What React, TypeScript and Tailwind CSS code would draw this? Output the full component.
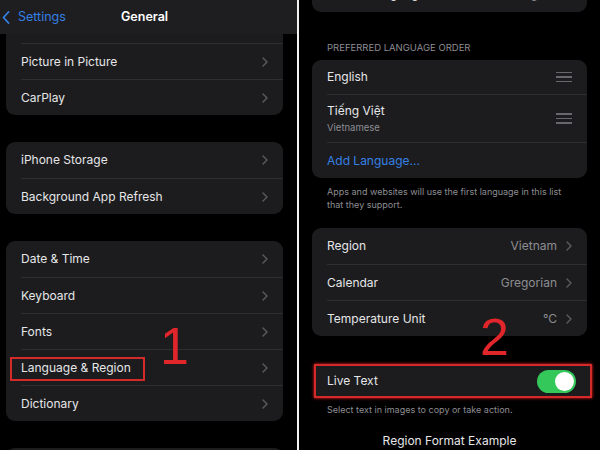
import React from 'react';

const font = { fontFamily: 'Inter, "Noto Sans", sans-serif' };

function Chevron({ className = 'text-[#5c5c60]' }: { className?: string }) {
  return (
    <svg width="6" height="10" viewBox="0 0 6 10" fill="none" className={className}>
      <path d="M1 1l4 4-4 4" stroke="currentColor" strokeWidth="1.4" strokeLinecap="round" strokeLinejoin="round" />
    </svg>
  );
}

function Handle() {
  return (
    <div className="flex w-[16px] flex-col gap-[3px]">
      <div className="h-[1.5px] bg-[#68686c]" />
      <div className="h-[1.5px] bg-[#68686c]" />
      <div className="h-[1.5px] bg-[#68686c]" />
    </div>
  );
}

// one settings row, separator on top unless it's the first row of the card
function Row({
  label,
  value,
  first = false,
  h = 'h-[36px]',
  children,
}: {
  label?: React.ReactNode;
  value?: string;
  first?: boolean;
  h?: string;
  children?: React.ReactNode;
}) {
  return (
    <div className={`relative flex shrink-0 ${h} pl-[15px]`}>
      <div
        className={`flex flex-1 items-center justify-between pr-[15px] ${
          first ? '' : 'border-t border-[#2e2e30]'
        }`}
      >
        {children ?? (
          <>
            <span className="text-[12px] text-[#e6e6e8]">{label}</span>
            <div className="flex items-center gap-[9px]">
              {value && <span className="text-[12px] text-[#8d8d92]">{value}</span>}
              <Chevron />
            </div>
          </>
        )}
      </div>
    </div>
  );
}

function LeftPanel() {
  return (
    <div className="flex w-[297px] shrink-0 flex-col bg-black">
      {/* nav bar */}
      <div className="relative flex h-[34px] shrink-0 items-center bg-[#1e1e20]">
        <div className="flex items-center gap-[8px] pl-[2px] text-[#3580e4]">
          <svg width="8" height="13" viewBox="0 0 8 13" fill="none">
            <path d="M6.5 1L1.5 6.5L6.5 12" stroke="currentColor" strokeWidth="1.8" strokeLinecap="round" strokeLinejoin="round" />
          </svg>
          <span className="text-[12.5px]">Settings</span>
        </div>
        <span className="absolute left-[121px] text-[12.5px] font-semibold text-white">General</span>
      </div>

      <div className="flex shrink-0 flex-col gap-[27px] pl-[6px] pr-[14px]">
        <div className="rounded-b-[9px] bg-[#1c1c1e]">
          <div className="h-[9px]" />
          <Row label="Picture in Picture" />
          <Row label="CarPlay" />
        </div>

        <div className="rounded-[9px] bg-[#1c1c1e]">
          <Row first label="iPhone Storage" />
          <Row label="Background App Refresh" />
        </div>

        <div className="rounded-[9px] bg-[#1c1c1e]">
          <Row first label="Date & Time" />
          <Row label="Keyboard" />
          <Row label="Fonts" />
          <div className="relative">
            <Row label="Language & Region" />
            <div className="absolute left-[4px] top-[8px] h-[24px] w-[135px] border-2 border-[#d42a2a]" />
          </div>
          <Row label="Dictionary" />
        </div>

        <div className="h-[30px] rounded-t-[9px] bg-[#1c1c1e]" />
      </div>
    </div>
  );
}

function RightPanel() {
  return (
    <div className="flex flex-1 flex-col bg-black px-[13px]">
      {/* top card, mostly scrolled away */}
      <div className="-mt-[24px] flex h-[36px] shrink-0 items-center justify-between rounded-[9px] bg-[#1c1c1e] px-[15px]">
        <span className="text-[12px] text-[#e6e6e8]">iPhone Language</span>
        <div className="flex items-center gap-[9px]">
          <span className="text-[12px] text-[#8d8d92]">English</span>
          <Chevron />
        </div>
      </div>

      <div className="mt-[30px] pl-[15px] text-[9.5px] leading-[12px] text-[#8d8d92]">PREFERRED LANGUAGE ORDER</div>

      <div className="mt-[6px] shrink-0 rounded-[9px] bg-[#1c1c1e]">
        <Row first h="h-[34px]">
          <span className="text-[12px] text-[#e6e6e8]">English</span>
          <Handle />
        </Row>
        <Row h="h-[48px]">
          <div className="flex flex-col">
            <span className="text-[12px] leading-[16px] text-[#e6e6e8]">Tiếng Việt</span>
            <span className="mt-[2px] text-[9.5px] leading-[13px] text-[#8d8d92]">Vietnamese</span>
          </div>
          <Handle />
        </Row>
        <Row h="h-[36px]">
          <span className="text-[12px] text-[#3580e4]">Add Language...</span>
        </Row>
      </div>

      <p className="mt-[7px] w-[266px] shrink-0 pl-[15px] text-[9px] leading-[13px] text-[#8d8d92]">
        Apps and websites will use the first language in this list that they support.
      </p>

      <div className="mt-[17px] shrink-0 rounded-[9px] bg-[#1c1c1e]">
        <Row first label="Region" value="Vietnam" />
        <Row label="Calendar" value="Gregorian" />
        <Row label="Temperature Unit" value="°C" />
      </div>

      <div className="-mr-[5px] ml-[2px] mt-[28px] flex h-[34px] shrink-0 items-center justify-between border-2 border-[#d42a2a] bg-[#1c1c1e] pl-[11px] pr-[14px] shadow-[0_0_3px_#ff2020]">
        <span className="text-[12px] text-[#e6e6e8]">Live Text</span>
        <div className="flex h-[23px] w-[39px] items-center justify-end rounded-full bg-[#34c759] pr-[2px]">
          <div className="h-[19px] w-[19px] rounded-full bg-white" />
        </div>
      </div>

      <p className="mt-[5px] shrink-0 pl-[15px] text-[9px] leading-[13px] text-[#8d8d92]">
        Select text in images to copy or take action.
      </p>

      <p className="mt-[17px] shrink-0 text-center text-[12px] leading-[16px] text-[#e6e6e8]">Region Format Example</p>
    </div>
  );
}

export default function App() {
  return (
    <div className="relative flex h-[450px] w-[600px] overflow-hidden bg-black" style={font}>
      <LeftPanel />
      <div className="w-[2px] shrink-0 bg-[#f2f2f2]" />
      <RightPanel />

      {/* step numbers drawn on top */}
      <span
        className="absolute left-[160px] top-[320px] text-[52px] leading-none text-[#e0262a]"
        style={{ fontFamily: '"Liberation Sans", Arial, sans-serif' }}
      >
        1
      </span>
      <span
        className="absolute left-[480px] top-[311px] text-[52px] leading-none text-[#e0262a]"
        style={{ fontFamily: '"Liberation Sans", Arial, sans-serif' }}
      >
        2
      </span>
    </div>
  );
}
